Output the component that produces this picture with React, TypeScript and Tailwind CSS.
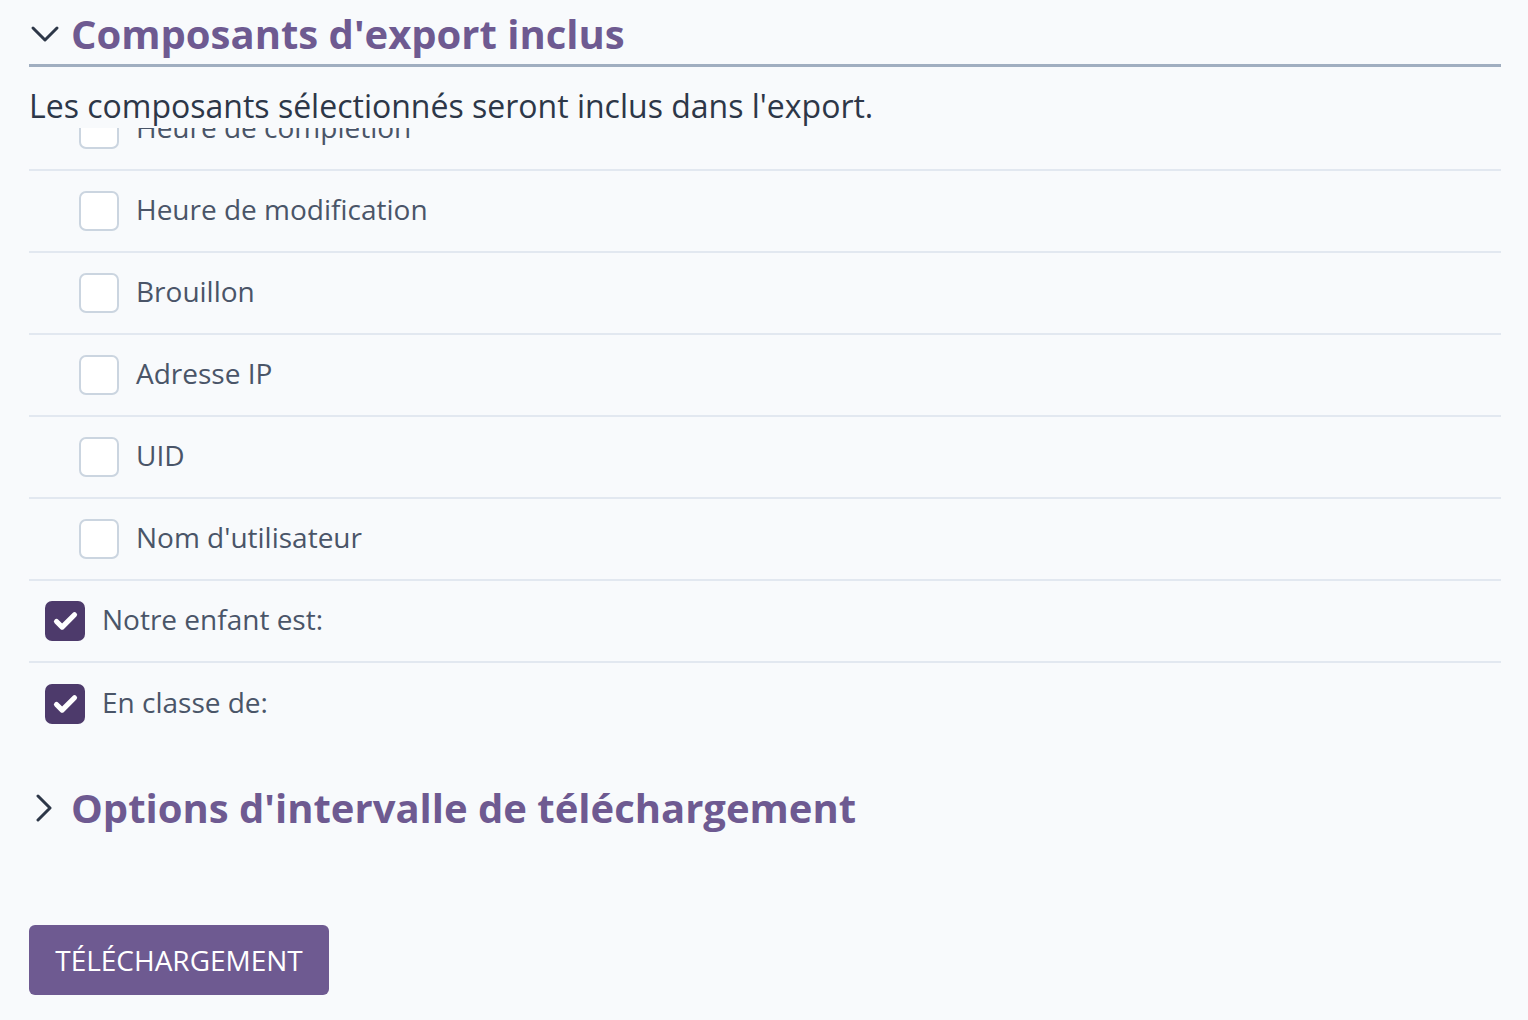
import { useEffect, useRef } from 'react';
import { Check } from 'lucide-react';

type Item = { label: string; checked: boolean; nested: boolean };

const items: Item[] = [
  { label: 'Identifiant de soumission', checked: false, nested: true },
  { label: 'Heure de création', checked: false, nested: true },
  { label: 'Heure de complétion', checked: false, nested: true },
  { label: 'Heure de modification', checked: false, nested: true },
  { label: 'Brouillon', checked: false, nested: true },
  { label: 'Adresse IP', checked: false, nested: true },
  { label: 'UID', checked: false, nested: true },
  { label: "Nom d'utilisateur", checked: false, nested: true },
  { label: 'Notre enfant est:', checked: true, nested: false },
  { label: 'En classe de:', checked: true, nested: false },
];

function ChevronDownIcon() {
  return (
    <svg width="30" height="18" viewBox="0 0 30 18" fill="none" className="shrink-0">
      <polyline points="3,3 15,15 27,3" stroke="#2d3748" strokeWidth="3" strokeLinecap="round" strokeLinejoin="round" />
    </svg>
  );
}

function ChevronRightIcon() {
  return (
    <svg width="18" height="28" viewBox="0 0 18 28" fill="none" className="shrink-0">
      <polyline points="3,2 15,14 3,26" stroke="#2d3748" strokeWidth="3" strokeLinecap="round" strokeLinejoin="round" />
    </svg>
  );
}

function Row({ item, last }: { item: Item; last: boolean }) {
  return (
    <label
      className={`flex h-[82px] items-center gap-[17px] ${item.nested ? 'pl-[50px]' : 'pl-[16px]'} ${
        last ? '' : 'border-b-2 border-[#e2e8f0]'
      }`}
    >
      {item.checked ? (
        <span className="flex h-[40px] w-[40px] shrink-0 items-center justify-center rounded-[7px] bg-[#4d3a6b]">
          <Check size={27} strokeWidth={4.6} color="#ffffff" />
        </span>
      ) : (
        <span className="h-[40px] w-[40px] shrink-0 rounded-[7px] border-2 border-[#cbd5e0] bg-white" />
      )}
      <span className="mb-[4px] text-[28px] text-[#4a5568]">{item.label}</span>
    </label>
  );
}

export default function App() {
  const listRef = useRef<HTMLDivElement>(null);

  useEffect(() => {
    // list is scrolled part way down
    if (listRef.current) listRef.current.scrollTop = 203;
  }, []);

  return (
    <div className="min-h-screen bg-[#f8fafc] pl-[29px] pr-[27px] font-['Open_Sans',sans-serif]">
      <div className="flex h-[67px] items-center gap-[11px] border-b-[3px] border-[#a0aec0] pl-[1px] pt-[4px]">
        <ChevronDownIcon />
        <h2 className="text-[40px] font-bold text-[#6e5a91]">Composants d'export inclus</h2>
      </div>

      <p className="pb-[2px] pt-[19px] text-[32px] leading-[40px] text-[#2d3748]">
        Les composants sélectionnés seront inclus dans l'export.
      </p>

      <div ref={listRef} className="h-[616px] overflow-hidden">
        {items.map((item, i) => (
          <Row key={item.label} item={item} last={i === items.length - 1} />
        ))}
      </div>

      <div className="mt-[32px] flex h-[64px] items-center gap-[18px] pl-[6px]">
        <ChevronRightIcon />
        <h2 className="text-[40px] font-bold text-[#6e5a91]">Options d'intervalle de téléchargement</h2>
      </div>

      <button className="mt-[85px] h-[70px] w-[300px] rounded-[6px] bg-[#6e5a91] text-[28px] uppercase text-white">
        Téléchargement
      </button>
    </div>
  );
}
